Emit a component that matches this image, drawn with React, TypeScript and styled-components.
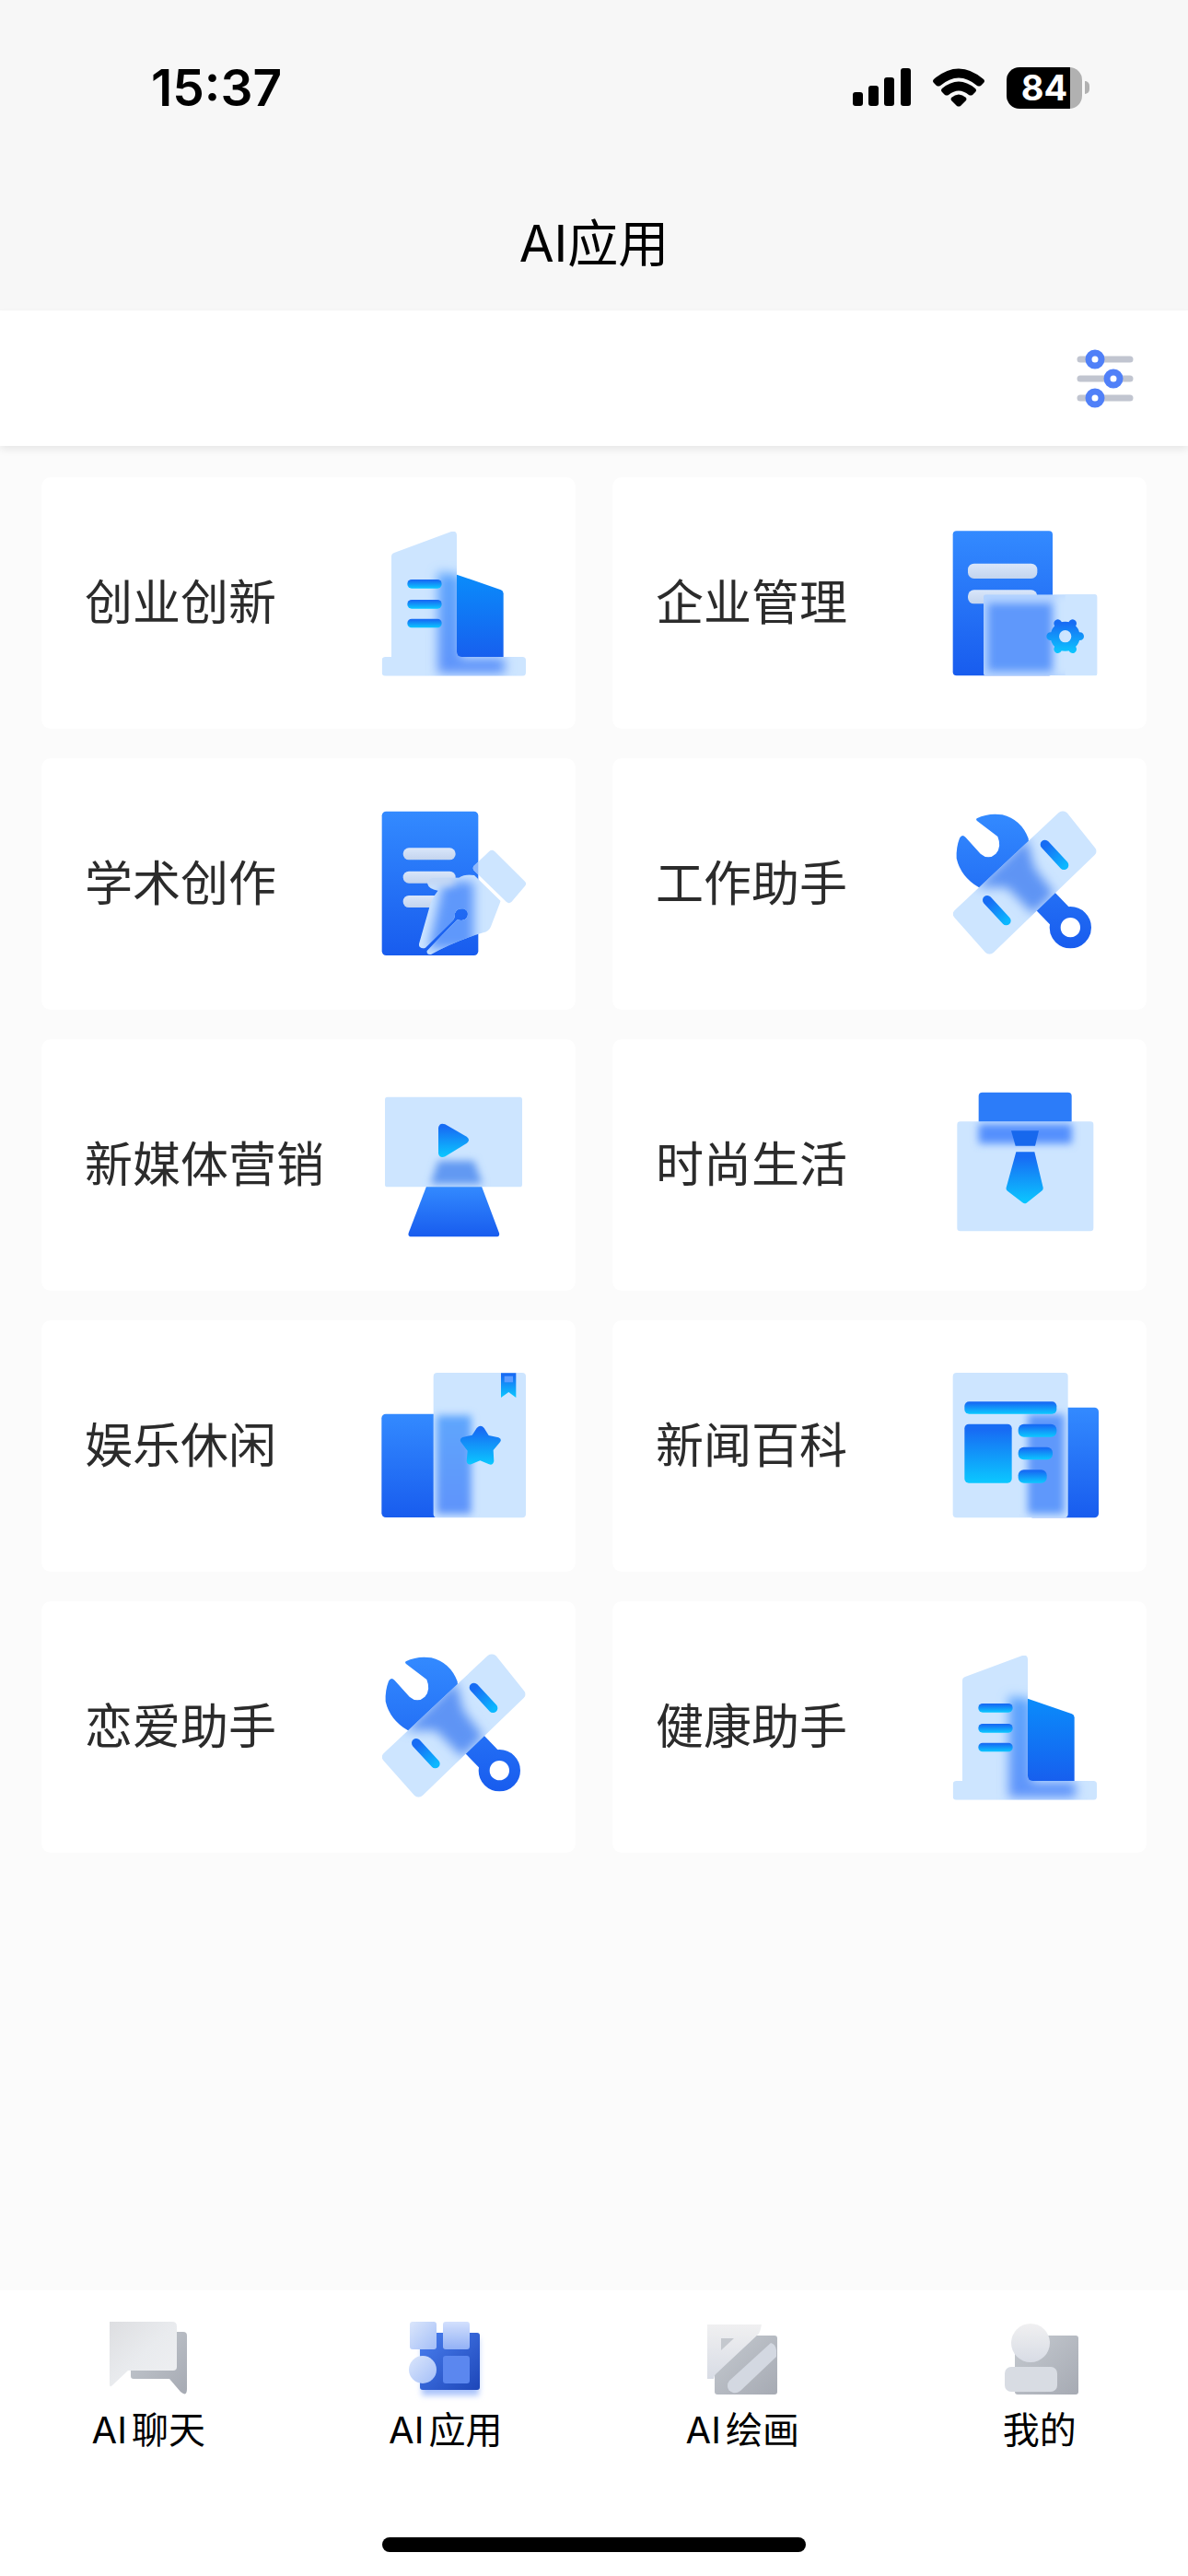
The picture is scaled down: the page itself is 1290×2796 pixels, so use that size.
import React from 'react';
import styled, { createGlobalStyle } from 'styled-components';

const GlobalStyle = createGlobalStyle`
  *, *::before, *::after { box-sizing: border-box; }
  body {
    margin: 0;
    background: #fbfbfb;
    color: #000;
    font-family: Inter, "Noto Sans CJK SC", sans-serif;
  }
  button, a { font: inherit; color: inherit; }
`;

const Page = styled.div`
  min-height: 100vh;
  display: flex;
  flex-direction: column;
`;

const Header = styled.header`
  background: #f7f7f7;
`;

const StatusBar = styled.div`
  display: flex;
  justify-content: space-between;
  align-items: center;
  height: 190px;
  padding: 0 107px 0 164px;
`;

const Clock = styled.time`
  font-size: 55px;
  line-height: 64px;
  font-weight: 600;
`;

const StatusIcons = styled.div`
  display: flex;
  align-items: center;
  gap: 24px;
`;

const Battery = styled.div`
  display: flex;
  align-items: center;
  gap: 3px;
`;

const BatteryBody = styled.div<{ $level: number }>`
  width: 82px;
  height: 45px;
  border-radius: 14px;
  background: linear-gradient(to right, #000 ${(p) => p.$level}%, #b1b1b1 ${(p) => p.$level}%);
  color: #fff;
  font-size: 38px;
  line-height: 45px;
  font-weight: 700;
  text-align: center;
`;

const BatteryTip = styled.div`
  width: 5px;
  height: 14px;
  border-radius: 0 5px 5px 0;
  background: #b1b1b1;
`;

const Title = styled.h1`
  margin: 0;
  height: 147px;
  padding-top: 34px;
  font-size: 55px;
  line-height: 80px;
  font-weight: 400;
  text-align: center;
`;

const Toolbar = styled.div`
  display: flex;
  justify-content: flex-end;
  align-items: center;
  height: 147px;
  padding-right: 57px;
  background: #fff;
  box-shadow: 0 4px 8px rgba(0, 0, 0, 0.08);
`;

const IconButton = styled.button`
  display: flex;
  padding: 0;
  border: 0;
  background: none;
`;

const Grid = styled.main`
  flex: 1;
  display: grid;
  grid-template-columns: 1fr 1fr;
  grid-auto-rows: 273px;
  align-content: start;
  gap: 32px 40px;
  padding: 34px 45px;
`;

const Card = styled.button`
  display: flex;
  justify-content: space-between;
  align-items: center;
  padding: 0 52px 0 47px;
  border: 0;
  border-radius: 10px;
  background: #fff;
  color: #2b2b2b;
  font-size: 52px;
  line-height: 76px;
  text-align: left;
`;

const TabBar = styled.nav`
  display: grid;
  grid-template-columns: repeat(4, 1fr);
  height: 268px;
  padding-top: 30px;
  background: #fff;
`;

const Tab = styled.a`
  display: flex;
  flex-direction: column;
  align-items: center;
  font-size: 40px;
  line-height: 52px;
  text-autospace: normal;
  text-decoration: none;
`;

const BottomArea = styled.footer`
  display: flex;
  flex-direction: column;
  height: 310px;
  background: #fff;
`;

const HomeIndicator = styled.div`
  align-self: center;
  width: 460px;
  height: 16px;
  border-radius: 8px;
  background: #000;
`;

/* Gradients and blurs shared by every drawing on the page. */
const Defs = () => (
  <svg width="0" height="0" style={{ position: 'absolute' }} aria-hidden="true">
    <defs>
      <linearGradient id="blue" x1="0" y1="0" x2="0" y2="1">
        <stop offset="0" stopColor="#338aff" />
        <stop offset="1" stopColor="#185cee" />
      </linearGradient>
      <linearGradient id="tower" x1="0" y1="0" x2="0" y2="1">
        <stop offset="0" stopColor="#0a8cfb" />
        <stop offset="1" stopColor="#175fee" />
      </linearGradient>
      <linearGradient id="cyan" x1="0" y1="0" x2="0" y2="1">
        <stop offset="0.1" stopColor="#176cf4" />
        <stop offset="1" stopColor="#0bc8ff" />
      </linearGradient>
      <linearGradient id="line" x1="0" y1="0" x2="0" y2="1">
        <stop offset="0" stopColor="#d9e6fa" />
        <stop offset="1" stopColor="#c3d4ee" />
      </linearGradient>
      <linearGradient id="wrench" gradientUnits="userSpaceOnUse" x1="0" y1="70" x2="0" y2="510">
        <stop offset="0" stopColor="#338aff" />
        <stop offset="1" stopColor="#185cee" />
      </linearGradient>
      <linearGradient id="towerFrost" x1="0" y1="0" x2="0" y2="1">
        <stop offset="0" stopColor="#5fa6fd" />
        <stop offset="1" stopColor="#5f93fa" />
      </linearGradient>
      <linearGradient id="greyLight" x1="0" y1="0" x2="1" y2="1">
        <stop offset="0" stopColor="#dddee1" />
        <stop offset="0.5" stopColor="#e9ebee" />
        <stop offset="1" stopColor="#eff0f2" />
      </linearGradient>
      <linearGradient id="greyFade" x1="0" y1="0" x2="0" y2="1">
        <stop offset="0" stopColor="#f0f0f1" />
        <stop offset="1" stopColor="#d8dce5" />
      </linearGradient>
      <linearGradient id="greyDark" x1="0" y1="0" x2="1" y2="1">
        <stop offset="0" stopColor="#c5cad0" />
        <stop offset="1" stopColor="#a6aab3" />
      </linearGradient>
      <linearGradient id="navBlue" x1="0" y1="0" x2="1" y2="1">
        <stop offset="0" stopColor="#4b80f0" />
        <stop offset="1" stopColor="#1d46b8" />
      </linearGradient>
      <linearGradient id="navPale" x1="0" y1="0" x2="1" y2="1">
        <stop offset="0" stopColor="#dbe6fb" />
        <stop offset="1" stopColor="#a4bff8" />
      </linearGradient>
      <linearGradient id="navTop" x1="0" y1="0" x2="0" y2="1">
        <stop offset="0" stopColor="#d3e0fd" />
        <stop offset="1" stopColor="#92b1f6" />
      </linearGradient>
      <filter id="soft" x="-30%" y="-60%" width="160%" height="220%">
        <feGaussianBlur stdDeviation="12" />
      </filter>
      <filter id="softer" x="-40%" y="-40%" width="180%" height="180%">
        <feGaussianBlur stdDeviation="18" />
      </filter>
      <filter id="navSoft" x="-30%" y="-50%" width="160%" height="200%">
        <feGaussianBlur stdDeviation="3" />
      </filter>
    </defs>
  </svg>
);

const GLASS = '#cde5ff';
const FROST = '#5e98fb';

const Art = ({ y, children }: { y: number; children: React.ReactNode }) => (
  <svg width="160" height="160" viewBox={`69 ${y} 480 480`} aria-hidden="true">
    {children}
  </svg>
);

const BuildingArt = () => (
  <Art y={72}>
    <clipPath id="buildingClip">
      <path d="M105 160q0-10 9-13L300 78q18-4 18 12v380q0 16 16 16h198q11 0 11 11v40q0 11-11 11H86q-12 0-12-11v-40q0-11 12-11h19z" />
    </clipPath>
    <path d="M318 218l144 50q8 3 8 12v206H318z" fill="url(#tower)" />
    <g clipPath="url(#buildingClip)">
      <path d="M70 70h480v480H70z" fill={GLASS} />
      <path d="M256 210l74 10v270h144v50H256z" fill="url(#towerFrost)" filter="url(#softer)" />
    </g>
    {[234, 300, 362].map((top) => (
      <rect key={top} x="157" y={top} width="112" height="29" rx="14" fill="url(#cyan)" />
    ))}
  </Art>
);

const ManageArt = () => (
  <Art y={72}>
    <clipPath id="manageClip"><rect x="174" y="283" width="370" height="264" rx="8" /></clipPath>
    <rect x="74" y="76" width="325" height="471" rx="12" fill="url(#blue)" />
    <rect x="123" y="182" width="226" height="49" rx="20" fill="url(#line)" />
    <rect x="123" y="268" width="226" height="45" rx="20" fill="url(#line)" />
    <g clipPath="url(#manageClip)">
      <path d="M174 283h370v264H174z" fill="#b4d3ff" />
      <path d="M410 283h134v264H410z" fill={GLASS} filter="url(#soft)" />
      <path d="M440 283h104v264H440z" fill={GLASS} />
      <path d="M188 312h208v220H188z" fill={FROST} filter="url(#soft)" />
    </g>
    <linearGradient id="gear" gradientUnits="userSpaceOnUse" x1="0" y1="365" x2="0" y2="475">
      <stop offset="0.1" stopColor="#176cf4" />
      <stop offset="1" stopColor="#0bc8ff" />
    </linearGradient>
    <circle cx="440" cy="419" r="34" fill="none" stroke="url(#gear)" strokeWidth="28" />
    <path
      d="M420 384l-4-7M460 384l4-7M420 454l-4 7M460 454l4 7M400 419h-8M480 419h8"
      fill="none" stroke="url(#gear)" strokeWidth="26" strokeLinecap="round"
    />
  </Art>
);

const WriteArt = () => (
  <Art y={60}>
    <clipPath id="nibClip">
      <path d="M216 506q-10 4-18-2-5-5-2-14l30-105q8-38 31-65-31-5-34-22-1-20 20-20h82q22-14 50-8l86 84-32 83q-6 16-25 20-90 26-170 71-15 2-13-12l99-102q22 8 32-8 7-20-12-27-22-3-28 15 1 14-6 22z" />
    </clipPath>
    <rect x="74" y="62" width="314" height="469" rx="14" fill="url(#blue)" />
    {[181, 257, 336].map((top) => (
      <rect key={top} x="143" y={top} width="171" height="39" rx="19" fill="url(#line)" />
    ))}
    <g clipPath="url(#nibClip)">
      <path d="M180 240h300v300H180z" fill={GLASS} />
      <path d="M275 290h98v220H225z" fill={FROST} filter="url(#softer)" />
      <path d="M190 260h120v46H190z" fill="#c3d7f4" filter="url(#soft)" />
    </g>
    <path d="M374 239l50-47q8-8 17 0l99 98q7 7 0 15l-44 52q-8 7-16 0L374 254q-6-8 0-15z" fill={GLASS} />
    <path d="M374 239l14-13v42l-14-14q-6-8 0-15z" fill="#8db7fb" />
  </Art>
);

const ToolsArt = () => (
  <Art y={60}>
    <clipPath id="rulerClip">
      <path d="M418 67q14-12 28 0l90 112q12 13 0 25L207 521q-14 12-27 0L80 409q-12-13 0-25z" />
    </clipPath>
    <path
      d="M152 85Q190 66 235 73Q296 88 320 150Q326 190 310 225L230 310L158 309Q100 275 86 215Q84 180 96 149Q104 134 116 147L164 200Q190 222 214 200Q234 178 220 144L152 92Q148 88 152 85z"
      fill="url(#wrench)"
    />
    <path d="M270 245L425 406" stroke="url(#wrench)" strokeWidth="84" />
    <circle cx="457" cy="440" r="50" fill="#fff" stroke="url(#wrench)" strokeWidth="36" />
    <g clipPath="url(#rulerClip)">
      <path d="M60 50h500v500H60z" fill={GLASS} />
      <path d="M150 310L315 150l25 95 65 85-70 65-85-85z" fill="#5f94f4" filter="url(#softer)" />
    </g>
    <linearGradient id="notchA" gradientUnits="userSpaceOnUse" x1="370" y1="165" x2="440" y2="240">
      <stop offset="0.1" stopColor="#176cf4" /><stop offset="1" stopColor="#0bb8ff" />
    </linearGradient>
    <linearGradient id="notchB" gradientUnits="userSpaceOnUse" x1="185" y1="348" x2="252" y2="420">
      <stop offset="0.1" stopColor="#176cf4" /><stop offset="1" stopColor="#0bb8ff" />
    </linearGradient>
    <path d="M374 170l62 67" stroke="url(#notchA)" strokeWidth="30" strokeLinecap="round" />
    <path d="M186 351l62 67" stroke="url(#notchB)" strokeWidth="30" strokeLinecap="round" />
  </Art>
);

const MediaArt = () => (
  <Art y={75}>
    <clipPath id="screenClip"><rect x="84" y="92" width="447" height="293" rx="8" /></clipPath>
    <path d="M219 383h180l57 152q3 12-10 12H171q-13 0-10-12z" fill="url(#blue)" />
    <g clipPath="url(#screenClip)">
      <path d="M80 90h460v300H80z" fill={GLASS} />
      <path d="M258 300h116l28 76H232z" fill="#6299f2" filter="url(#soft)" />
    </g>
    <path d="M258 192q4-18 22-11l70 40q14 10 0 22l-70 43q-18 7-22-10z" fill="url(#cyan)" />
  </Art>
);

const FashionArt = () => (
  <Art y={75}>
    <clipPath id="boxClip"><rect x="88" y="172" width="444" height="357" rx="10" /></clipPath>
    <rect x="158" y="77" width="303" height="120" rx="12" fill="#2c7cf9" />
    <g clipPath="url(#boxClip)">
      <path d="M80 170h460v370H80z" fill={GLASS} />
      <path d="M158 180h304v64H158z" fill="#5590fd" filter="url(#soft)" />
    </g>
    <path d="M264 202h90l-12 49h-64z" fill="#1768ed" />
    <path d="M280 271h60l28 116q1 7-5 11l-49 39q-7 4-13-1l-49-38q-6-4-4-11z" fill="url(#cyan)" />
  </Art>
);

const LeisureArt = () => (
  <Art y={63}>
    <clipPath id="bookClip"><rect x="242" y="63" width="301" height="472" rx="12" /></clipPath>
    <rect x="73" y="197" width="240" height="337" rx="14" fill="url(#blue)" />
    <g clipPath="url(#bookClip)">
      <path d="M240 60h310v480H240z" fill={GLASS} />
      <path d="M252 202h113v321H252z" fill="url(#towerFrost)" filter="url(#soft)" />
    </g>
    <path d="M462 64h49v80l-24-18-25 18z" fill="url(#cyan)" />
    <rect x="473" y="74" width="28" height="20" fill="#5c9cff" />
    <path
      d="M383 243q13-13 24 0l15 24 32 7q12 5 5 15l-22 26 2 36q-3 14-16 10l-29-12-29 12q-13 3-15-10l3-34-22-29q-5-11 6-15l31-7z"
      fill="url(#cyan)"
    />
  </Art>
);

const NewsArt = () => (
  <Art y={63}>
    <clipPath id="paperClip"><rect x="74" y="63" width="375" height="472" rx="12" /></clipPath>
    <rect x="320" y="176" width="229" height="359" rx="14" fill="url(#blue)" />
    <g clipPath="url(#paperClip)">
      <path d="M70 60h390v480H70z" fill={GLASS} />
      <path d="M318 198h119v325H318z" fill={FROST} filter="url(#soft)" />
    </g>
    <rect x="112" y="157" width="300" height="40" rx="15" fill="url(#cyan)" />
    <rect x="112" y="230" width="154" height="192" rx="14" fill="url(#cyan)" />
    <rect x="287" y="230" width="125" height="42" rx="18" fill="url(#cyan)" />
    <rect x="287" y="305" width="112" height="41" rx="18" fill="url(#cyan)" />
    <rect x="287" y="379" width="93" height="43" rx="18" fill="url(#cyan)" />
  </Art>
);

const NavArt = ({ children }: { children: React.ReactNode }) => (
  <svg width="96" height="96" viewBox="-3 0 96 96" aria-hidden="true">{children}</svg>
);

const ChatArt = () => (
  <NavArt>
    <path d="M26 15h57q4 0 4 4v58q0 9-7 3l-12-14H29q-3 0-3-3z" fill="url(#greyDark)" />
    <path d="M3 4h68q5 0 5 5v44q0 4-4 4H23L6 73q-3 3-3-1z" fill="url(#greyLight)" />
  </NavArt>
);

const AppsArt = () => (
  <NavArt>
    <path d="M19 22h62v62H19z" fill="#a9c2fb" filter="url(#navSoft)" />
    <rect x="17" y="16" width="65" height="62" rx="3" fill="url(#navBlue)" />
    <rect x="6" y="4" width="29" height="30" rx="3" fill="url(#navPale)" />
    <rect x="42" y="4" width="29" height="30" rx="3" fill="url(#navTop)" />
    <circle cx="20" cy="56" r="15" fill="url(#navPale)" />
    <rect x="42" y="41" width="29" height="30" rx="3" fill="#5b87ef" />
  </NavArt>
);

const PaintArt = () => (
  <NavArt>
    <rect x="15" y="19" width="68" height="64" rx="3" fill="url(#greyDark)" />
    <path d="M7 7h59q-1 6-3 10L16 61q-2 2-2 5H7z" fill="url(#greyFade)" />
    <path d="M22 22h14L22 35z" fill="#c4c8ce" />
    <path d="M76 27q5 1 6 8v7L43 79q-4 3-8 2-6-2-6-7 0-4 2-6z" fill="#d3d8e1" />
  </NavArt>
);

const ProfileArt = () => (
  <NavArt>
    <rect x="18" y="19" width="69" height="64" rx="3" fill="url(#greyDark)" />
    <circle cx="35" cy="27" r="21" fill="url(#greyFade)" />
    <rect x="7" y="53" width="57" height="27" rx="7" fill="#d8dce3" />
  </NavArt>
);

const SignalIcon = () => (
  <svg width="63" height="42" viewBox="0 0 63 42" aria-hidden="true">
    <rect x="0" y="26" width="11" height="15" rx="3" />
    <rect x="17" y="19" width="11" height="22" rx="3" />
    <rect x="34" y="10" width="11" height="31" rx="3" />
    <rect x="52" y="0" width="11" height="41" rx="3" />
  </svg>
);

const WifiIcon = () => (
  <svg width="56" height="42" viewBox="0 0 56 42" aria-hidden="true">
    <path d="M1 12Q28-11 55 12q2 2 0 4l-3 3q-2 1-4 0Q28 2 8 19q-2 1-4 0l-3-3q-2-2 0-4z" />
    <path d="M10 22q18-15 36 0 2 2 0 4l-3 3q-2 1-4 0-11-9-22 0-2 1-4 0l-3-3q-2-2 0-4z" />
    <path d="M20 32q8-7 16 0 1 2 0 3l-6 6q-2 1-4 0l-6-6q-1-1 0-3z" />
  </svg>
);

const FilterIcon = () => (
  <svg width="66" height="66" viewBox="0 0 66 66" aria-hidden="true">
    <g stroke="#c1c5d0" strokeWidth="7" strokeLinecap="round">
      <path d="M6 12h54M6 33h54M6 54h54" />
    </g>
    <g fill="#fff" stroke="#5080f8" strokeWidth="7">
      <circle cx="22" cy="12" r="7" />
      <circle cx="42" cy="33" r="7" />
      <circle cx="22" cy="54" r="7" />
    </g>
  </svg>
);

const categories = [
  { label: '创业创新', Icon: BuildingArt },
  { label: '企业管理', Icon: ManageArt },
  { label: '学术创作', Icon: WriteArt },
  { label: '工作助手', Icon: ToolsArt },
  { label: '新媒体营销', Icon: MediaArt },
  { label: '时尚生活', Icon: FashionArt },
  { label: '娱乐休闲', Icon: LeisureArt },
  { label: '新闻百科', Icon: NewsArt },
  { label: '恋爱助手', Icon: ToolsArt },
  { label: '健康助手', Icon: BuildingArt },
];

const tabs = [
  { label: 'AI聊天', Icon: ChatArt },
  { label: 'AI应用', Icon: AppsArt },
  { label: 'AI绘画', Icon: PaintArt },
  { label: '我的', Icon: ProfileArt },
];

export default function App() {
  return (
    <Page>
      <GlobalStyle />
      <Defs />
      <Header>
        <StatusBar>
          <Clock>15:37</Clock>
          <StatusIcons>
            <SignalIcon />
            <WifiIcon />
            <Battery>
              <BatteryBody $level={84}>84</BatteryBody>
              <BatteryTip />
            </Battery>
          </StatusIcons>
        </StatusBar>
        <Title>AI应用</Title>
      </Header>
      <Toolbar>
        <IconButton type="button" aria-label="筛选">
          <FilterIcon />
        </IconButton>
      </Toolbar>
      <Grid>
        {categories.map(({ label, Icon }) => (
          <Card key={label} type="button">
            <span>{label}</span>
            <Icon />
          </Card>
        ))}
      </Grid>
      <BottomArea>
        <TabBar>
          {tabs.map(({ label, Icon }) => (
            <Tab key={label} href="#" aria-current={label === 'AI应用' ? 'page' : undefined}>
              <Icon />
              <span>{label}</span>
            </Tab>
          ))}
        </TabBar>
        <HomeIndicator />
      </BottomArea>
    </Page>
  );
}
